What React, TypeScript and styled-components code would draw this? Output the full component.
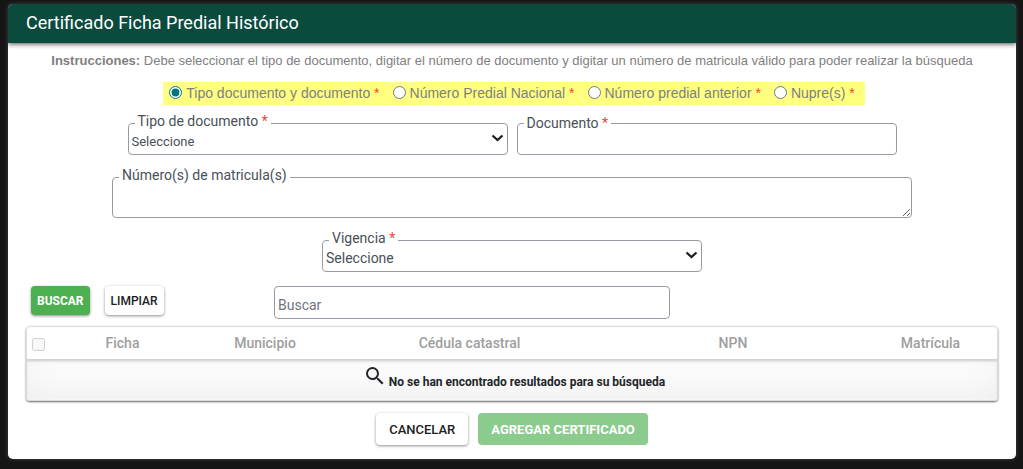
import React from "react";
import styled, { createGlobalStyle, css } from "styled-components";
import { MdSearch } from "react-icons/md";

const GlobalStyle = createGlobalStyle`
  *, *::before, *::after { box-sizing: border-box; }
  body {
    margin: 0;
    background: #151515;
    color: #495057;
    font-family: Roboto, "Liberation Sans", sans-serif;
    font-size: 14px;
  }
  button, input, select, textarea { font-family: inherit; }
`;

const Page = styled.main`
  padding: 4px 7px 10px 8px;
`;

const Dialog = styled.section`
  background: #fff;
  border-radius: 5px;
  overflow: hidden;
  box-shadow: 0 0 4px rgba(255, 255, 255, 0.2);
`;

const Header = styled.header`
  padding: 0 18px 2px;
  background: #0b4b3e;
  box-shadow: 0 1px 5px rgba(0, 0, 0, 0.7);
`;

const Title = styled.h1`
  margin: 0;
  color: #fff;
  font-size: 18px;
  font-weight: 400;
  line-height: 37px;
`;

const Form = styled.form`
  display: flex;
  flex-direction: column;
  align-items: center;
  padding: 9px 18px 14px;
`;

const Instructions = styled.p`
  margin: 0 0 13px;
  color: #808080;
  font-family: "Liberation Sans", Arial, sans-serif;
  font-size: 13px;
  line-height: 17px;
`;

const Modes = styled.div`
  display: flex;
  gap: 13px;
  margin: 0 0 9px 4px;
  padding: 0 10px 0 6px;
  background: #ffff80;
  color: #808080;
  font-family: "Liberation Sans", Arial, sans-serif;
  font-size: 14px;
  line-height: 23px;
`;

const Mode = styled.label`
  display: flex;
  align-items: center;
  gap: 4px;
`;

const Radio = styled.input`
  width: 13px;
  height: 13px;
  margin: 0 0 2px;
  accent-color: #00757a;
`;

const Required = styled.span`
  color: #f44336;
`;

const FieldRow = styled.div`
  display: flex;
  align-items: flex-end;
  justify-content: center;
  gap: 9px;
  width: 100%;
  margin-bottom: 13px;
`;

const Field = styled.fieldset<{ $max: number }>`
  flex: 1 1 0;
  min-width: 0;
  max-width: ${(p) => p.$max}px;
  margin: 0;
  padding: 0;
  border: 1px solid #969ca6;
  border-radius: 4px;
`;

const Legend = styled.legend<{ $raised?: boolean }>`
  margin-left: 6px;
  padding: 0 3px ${(p) => (p.$raised ? 4 : 0)}px;
  font-size: 14px;
  line-height: 14px;
`;

const control = css`
  display: block;
  width: 100%;
  border: 0;
  outline: 0;
  background: transparent;
  color: #495057;
`;

const SelectBox = styled.div`
  display: grid;
  align-items: center;
  margin-bottom: 4px;
  & > * { grid-area: 1 / 1; }
`;

const Select = styled.select<{ $size: number }>`
  ${control}
  appearance: none;
  height: 18px;
  padding: 0 20px 0 3px;
  font-size: ${(p) => p.$size}px;
`;

const Chevron = styled.svg`
  justify-self: end;
  margin: 0 3px 6px 0;
  pointer-events: none;
`;

const TextInput = styled.input`
  ${control}
  height: 24px;
  padding: 0 4px;
  font-size: 14px;
`;

const TextArea = styled.textarea`
  ${control}
  height: 31px;
  padding: 2px 4px;
  font-size: 14px;
`;

const Toolbar = styled.div`
  display: flex;
  align-items: flex-start;
  width: 100%;
  margin: 1px 0 7px;
  padding-left: 5px;
`;

const Actions = styled.div`
  display: flex;
  flex: 0 0 243px;
  gap: 15px;
`;

const SearchInput = styled.input`
  flex: 0 1 396px;
  min-width: 0;
  height: 33px;
  padding: 5px 3px 0;
  border: 1px solid #969ca6;
  border-radius: 4px;
  font-size: 14px;
  &::placeholder { color: #6c757d; }
`;

const Button = styled.button<{ $primary?: boolean; $large?: boolean }>`
  height: ${(p) => (p.$large ? 32 : 29)}px;
  padding: 0 ${(p) => (p.$large ? 13 : 6)}px;
  border: 0;
  border-radius: 4px;
  background: ${(p) => (p.$primary ? "#4caf50" : "#fff")};
  color: ${(p) => (p.$primary ? "#fff" : "#212121")};
  font-size: ${(p) => (p.$large ? 13 : 12)}px;
  font-weight: ${(p) => (p.$primary ? 700 : 500)};
  box-shadow: 0 1px 3px rgba(0, 0, 0, 0.45);
  &:disabled {
    background: #8bcb8e;
    box-shadow: none;
  }
`;

const TableFrame = styled.div`
  width: 100%;
  margin-bottom: 12px;
  border: 1px solid #dcdcdc;
  border-radius: 4px;
  overflow: hidden;
  box-shadow: 0 1px 2px rgba(0, 0, 0, 0.6);
`;

const Table = styled.table`
  width: 100%;
  border-collapse: collapse;
  table-layout: fixed;
`;

const HeadCell = styled.th`
  height: 32px;
  padding: 0;
  border-bottom: 1px solid #d2d2d2;
  color: #9e9e9e;
  font-size: 14px;
  font-weight: 500;
  text-align: center;
`;

const CheckCell = styled(HeadCell)`
  padding: 4px 0 0 5px;
  text-align: left;
`;

const CheckBox = styled.input`
  display: block;
  width: 13px;
  height: 13px;
  margin: 0;
`;

const EmptyCell = styled.td`
  height: 41px;
  padding: 0;
  background: linear-gradient(#fefefe, #f6f6f6);
  box-shadow: inset 0 2px 3px -1px rgba(0, 0, 0, 0.2), inset 0 0 30px rgba(0, 0, 0, 0.04);
`;

const EmptyMessage = styled.div`
  display: flex;
  align-items: flex-start;
  justify-content: center;
  gap: 2px;
  height: 40px;
  padding: 4px 0 0 4px;
  color: #212529;
  font-size: 12px;
  font-weight: 700;
  line-height: 36px;
`;

const Footer = styled.footer`
  display: flex;
  gap: 10px;
`;

const modes = [
  "Tipo documento y documento",
  "Número Predial Nacional",
  "Número predial anterior",
  "Nupre(s)",
];

const columns = [
  { name: "Ficha", width: 141 },
  { name: "Municipio", width: 144 },
  { name: "Cédula catastral", width: 265 },
  { name: "NPN", width: 262 },
  { name: "Matrícula", width: 133 },
];

function DropDown({ id, size }: { id: string; size: number }) {
  return (
    <SelectBox>
      <Select id={id} $size={size}>
        <option>Seleccione</option>
      </Select>
      <Chevron width="13" height="8" viewBox="0 0 13 8" aria-hidden="true">
        <path d="M1.5 1.5 L6.5 6 L11.5 1.5" fill="none" stroke="#1c1c1c" strokeWidth="2.2" />
      </Chevron>
    </SelectBox>
  );
}

export default function App() {
  return (
    <Page>
      <GlobalStyle />
      <Dialog aria-labelledby="title">
        <Header>
          <Title id="title">Certificado Ficha Predial Histórico</Title>
        </Header>
        <Form onSubmit={(e) => e.preventDefault()}>
          <Instructions>
            <b>Instrucciones:</b> Debe seleccionar el tipo de documento, digitar el número de
            documento y digitar un número de matricula válido para poder realizar la búsqueda
          </Instructions>
          <Modes role="radiogroup" aria-label="Modo de búsqueda">
            {modes.map((name, i) => (
              <Mode key={name}>
                <Radio type="radio" name="mode" defaultChecked={i === 0} />
                <span>
                  {name} <Required>*</Required>
                </span>
              </Mode>
            ))}
          </Modes>
          <FieldRow>
            <Field $max={380}>
              <Legend $raised>
                <label htmlFor="docType">
                  Tipo de documento <Required>*</Required>
                </label>
              </Legend>
              <DropDown id="docType" size={13} />
            </Field>
            <Field $max={380}>
              <Legend>
                <label htmlFor="doc">
                  Documento <Required>*</Required>
                </label>
              </Legend>
              <TextInput id="doc" type="text" />
            </Field>
          </FieldRow>
          <FieldRow>
            <Field $max={800}>
              <Legend $raised>
                <label htmlFor="registry">Número(s) de matricula(s)</label>
              </Legend>
              <TextArea id="registry" />
            </Field>
          </FieldRow>
          <FieldRow>
            <Field $max={380}>
              <Legend $raised>
                <label htmlFor="year">
                  Vigencia <Required>*</Required>
                </label>
              </Legend>
              <DropDown id="year" size={14} />
            </Field>
          </FieldRow>
          <Toolbar>
            <Actions>
              <Button type="submit" $primary>BUSCAR</Button>
              <Button type="reset">LIMPIAR</Button>
            </Actions>
            <SearchInput type="search" placeholder="Buscar" aria-label="Buscar" />
          </Toolbar>
          <TableFrame>
            <Table>
              <colgroup>
                <col width={25} />
                {columns.map((c) => (
                  <col key={c.name} width={c.width} />
                ))}
              </colgroup>
              <thead>
                <tr>
                  <CheckCell>
                    <CheckBox type="checkbox" disabled aria-label="Seleccionar todo" />
                  </CheckCell>
                  {columns.map((c) => (
                    <HeadCell key={c.name} scope="col">{c.name}</HeadCell>
                  ))}
                </tr>
              </thead>
              <tbody>
                <tr>
                  <EmptyCell colSpan={6}>
                    <EmptyMessage>
                      <MdSearch size={24} aria-hidden />
                      <span>No se han encontrado resultados para su búsqueda</span>
                    </EmptyMessage>
                  </EmptyCell>
                </tr>
              </tbody>
            </Table>
          </TableFrame>
          <Footer>
            <Button type="button" $large>CANCELAR</Button>
            <Button type="button" $large $primary disabled>AGREGAR CERTIFICADO</Button>
          </Footer>
        </Form>
      </Dialog>
    </Page>
  );
}
